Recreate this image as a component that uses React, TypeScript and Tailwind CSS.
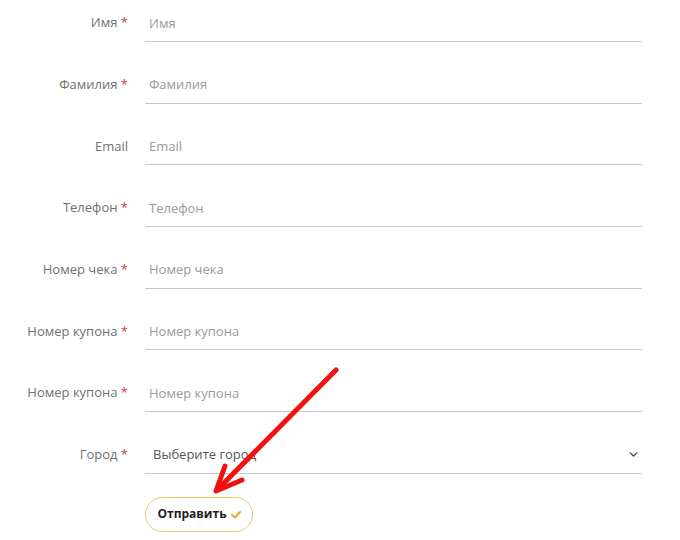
import { ChevronDown } from "lucide-react";

const fields = [
  { label: "Имя", required: true },
  { label: "Фамилия", required: true },
  { label: "Email", required: false },
  { label: "Телефон", required: true },
  { label: "Номер чека", required: true },
  { label: "Номер купона", required: true },
  { label: "Номер купона", required: true },
];

function Label({ text, required }: { text: string; required: boolean }) {
  return (
    <div className="w-[128px] shrink-0 text-right text-[13px] text-[#707070]">
      {text}
      {required && <span className="text-[#c4443c]"> *</span>}
    </div>
  );
}

export default function App() {
  return (
    <div
      className="relative w-[680px] h-[540px] bg-white overflow-hidden"
      style={{ fontFamily: '"Open Sans", "Liberation Sans", sans-serif' }}
    >
      <form className="flex flex-col gap-[23.7px] pt-[4px] pr-[38px]">
        {fields.map((f, i) => (
          <div key={i} className="flex items-center gap-[17px]">
            <Label text={f.label} required={f.required} />
            <input
              type="text"
              placeholder={f.label}
              className="flex-1 h-[38px] border-b border-[#c8c8c8] px-[4px] text-[13px] text-[#444] placeholder:text-[#9a9a9a] outline-none"
            />
          </div>
        ))}
        <div className="flex items-center gap-[17px]">
          <Label text="Город" required />
          <div className="flex-1 h-[38px] border-b border-[#c8c8c8] flex items-center justify-between pl-[8px] pr-[2px]">
            <span className="text-[13px] text-[#555]">Выберите город</span>
            <ChevronDown className="w-[13px] h-[13px] text-[#444]" strokeWidth={2.5} />
          </div>
        </div>
        <div className="flex pl-[145px] -mt-[1px]">
          <button
            type="button"
            className="h-[35px] w-[108px] rounded-full border border-[#f2c66a] flex items-center justify-center gap-[4px] text-[12px] font-bold text-[#222]"
          >
            Отправить
            <svg width="10" height="8" viewBox="0 0 10 8" className="mt-[2px]">
              <path d="M1 4 L4 6.5 L9 1" fill="none" stroke="#f0a526" strokeWidth="2" strokeLinecap="round" strokeLinejoin="round" />
            </svg>
          </button>
        </div>
      </form>
      <svg className="absolute inset-0 pointer-events-none" width="680" height="540" viewBox="0 0 680 540">
        <g stroke="#f21010" strokeWidth="5" strokeLinecap="round" strokeLinejoin="round" fill="none">
          <path d="M336 370 L217 490" />
          <path d="M225 466 L216 491 L242 480" />
        </g>
      </svg>
    </div>
  );
}
